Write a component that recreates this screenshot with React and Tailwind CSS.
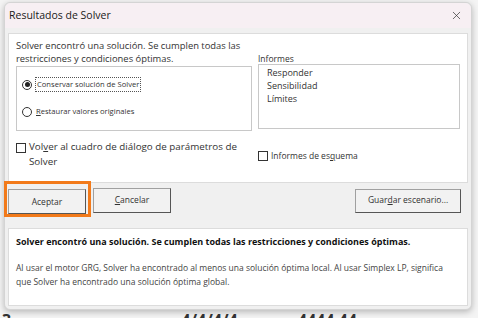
import { X } from 'lucide-react';

const font = { fontFamily: '"Open Sans", "Noto Sans", sans-serif' };

const Radio = ({ checked, label, focused, u }) => (
  <div className="flex items-center gap-[3px]">
    <span className="w-[10px] h-[10px] rounded-full border border-[#333] flex items-center justify-center bg-white">
      {checked && <span className="w-[5px] h-[5px] rounded-full bg-[#222]" />}
    </span>
    <span className={focused ? 'border border-dotted border-[#555] px-[1px] leading-[13px]' : 'px-[1px] leading-[13px]'}>
      {u ? (
        <>
          <span className="underline">{u}</span>
          {label.slice(1)}
        </>
      ) : (
        label
      )}
    </span>
  </div>
);

const Box = () => <span className="block w-[10px] h-[10px] border border-[#333] bg-white shrink-0" />;

export default function App() {
  return (
    <div className="w-[478px] h-[318px] bg-[#f4f4f4] overflow-hidden relative text-[#222]" style={font}>
      {/* sheet behind the dialog, only glyph tops show */}
      <div className="absolute left-0 bottom-[-12px] w-full h-[20px] flex items-start pl-[2px] text-[16px] font-bold text-[#333] leading-[20px]">
        <span>3 —</span>
        <span className="ml-[150px]">4/4/4/4</span>
        <span className="ml-[60px]">4444 44</span>
      </div>
      <div className="absolute left-[4px] top-[2px] w-[468px] h-[308px] bg-[#f0f0f0] rounded-[6px] border border-[#d4d4d4] shadow-[0_2px_6px_rgba(0,0,0,0.25)] flex flex-col">
        <div className="h-[25px] bg-[#f7eff3] rounded-t-[6px] flex items-center justify-between pl-[4px] pr-[8px]">
          <span className="text-[10.5px] text-[#1a1a1a]">Resultados de Solver</span>
          <X size={13} strokeWidth={1.3} className="text-[#333]" />
        </div>
        <div className="mx-[3px] mt-[5px] h-[150px] bg-white border border-[#dcdcdc] px-[7px] pt-[5px] flex gap-[6px]">
          <div className="w-[236px] flex flex-col">
            <p className="text-[9.4px] leading-[13px] text-[#333]">
              Solver encontró una solución. Se cumplen todas las restricciones y condiciones óptimas.
            </p>
            <div className="mt-[1px] h-[65px] border border-[#c8c8c8] flex flex-col gap-[13px] pl-[5px] pt-[10px] text-[7.6px] text-[#333]">
              <Radio checked focused label="Conservar solución de Solver" />
              <Radio label="Restaurar valores originales" u="R" />
            </div>
            <div className="mt-[8px] flex items-start gap-[3px] text-[9.8px] leading-[15px] text-[#333]">
              <span className="mt-[4px]"><Box /></span>
              <span>
                Vol<span className="underline">v</span>er al cuadro de diálogo de parámetros de Solver
              </span>
            </div>
          </div>
          <div className="flex-1 flex flex-col">
            <span className="mt-[14px] text-[8.5px] leading-[11px] text-[#333]">Informes</span>
            <div className="h-[65px] border border-[#c8c8c8] flex flex-col pl-[8px] pt-[1px] text-[9px] leading-[13px] text-[#333]">
              <span>Responder</span>
              <span>Sensibilidad</span>
              <span>Límites</span>
            </div>
            <div className="mt-[21px] flex items-center gap-[3px] text-[8.5px] text-[#333]">
              <Box />
              <span>
                Informes de es<span className="underline">q</span>uema
              </span>
            </div>
          </div>
        </div>
        <div className="flex items-center px-[3px] mt-[4px] h-[27px]">
          <div className="relative">
            <div className="absolute -left-[4px] -top-[6px] w-[87px] h-[36px] border-[3px] border-[#f27a1a]" />
            <button className="w-[78px] h-[25px] bg-[#f2f2f2] border border-[#a0a0a0] border-r-[#555] border-b-[#555] text-[8.5px] text-[#333]">
              Aceptar
            </button>
          </div>
          <button className="ml-[7px] w-[78px] h-[25px] bg-[#f2f2f2] border border-[#a0a0a0] border-r-[#555] border-b-[#555] text-[8.5px] text-[#333]">
            <span className="underline">C</span>ancelar
          </button>
          <button className="ml-auto mr-[7px] w-[106px] h-[24px] bg-[#f2f2f2] border border-[#a0a0a0] border-r-[#555] border-b-[#555] text-[8.5px] text-[#333]">
            Guar<span className="underline">d</span>ar escenario...
          </button>
        </div>
        <div className="mx-[3px] mt-[14px] h-[78px] bg-white border border-[#dcdcdc] px-[7px] pt-[6px]">
          <p className="text-[9px] font-bold text-[#111]">
            Solver encontró una solución. Se cumplen todas las restricciones y condiciones óptimas.
          </p>
          <p className="mt-[12px] text-[8.5px] leading-[14px] text-[#444]">
            Al usar el motor GRG, Solver ha encontrado al menos una solución óptima local. Al usar Simplex LP, significa que Solver ha encontrado una solución óptima global.
          </p>
        </div>
      </div>
    </div>
  );
}
